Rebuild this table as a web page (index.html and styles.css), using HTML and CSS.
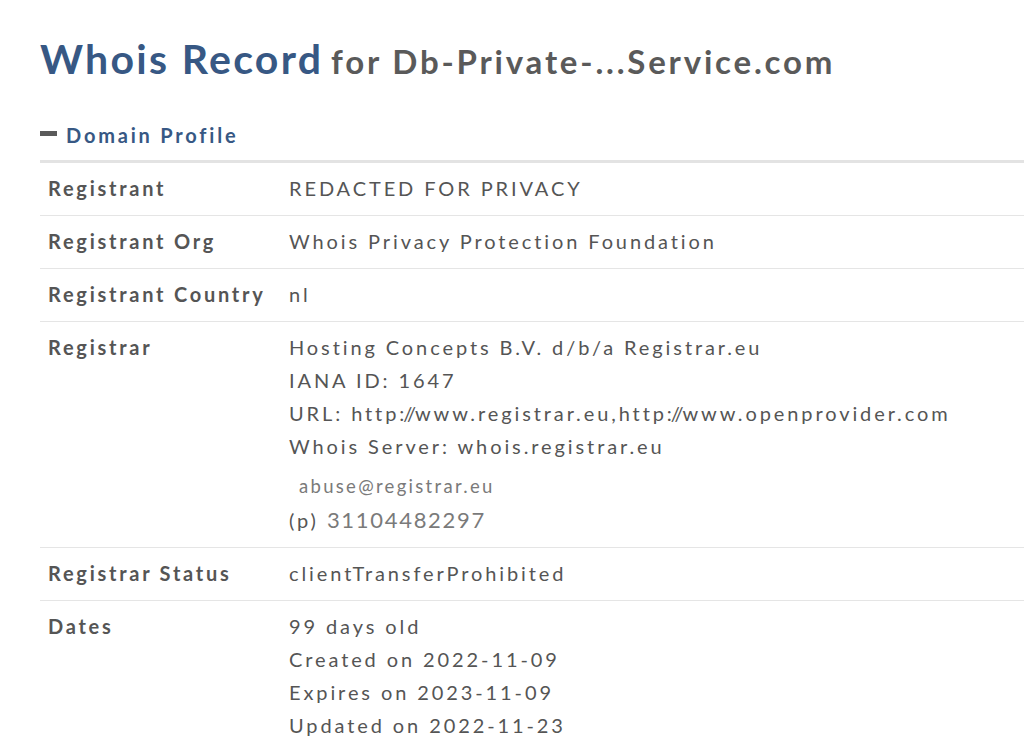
FILE: index.html
```html
<!DOCTYPE html>
<html>
<head>
<meta charset="utf-8">
<link rel="stylesheet" href="styles.css">
</head>
<body>
<div class="page">
  <h1 class="title"><span class="title-main">Whois Record</span> <span class="title-sub">for Db-Private-...Service.com</span></h1>
  <div class="section-head">
    <span class="minus"></span>
    <span class="section-title">Domain Profile</span>
  </div>
  <div class="table">
    <div class="row">
      <div class="label">Registrant</div>
      <div class="value">REDACTED FOR PRIVACY</div>
    </div>
    <div class="row">
      <div class="label">Registrant Org</div>
      <div class="value">Whois Privacy Protection Foundation</div>
    </div>
    <div class="row">
      <div class="label">Registrant Country</div>
      <div class="value">nl</div>
    </div>
    <div class="row">
      <div class="label">Registrar</div>
      <div class="value">
        <div>Hosting Concepts B.V. d/b/a Registrar.eu</div>
        <div>IANA ID: 1647</div>
        <div>URL: http<span class="sl">://</span>www.registrar.eu,http<span class="sl">://</span>www.openprovider.com</div>
        <div>Whois Server: whois.registrar.eu</div>
        <div class="contact">
          <div class="email">abuse@registrar.eu</div>
          <div class="phone"><span class="p">(p)</span> <span class="num">31104482297</span></div>
        </div>
      </div>
    </div>
    <div class="row">
      <div class="label">Registrar Status</div>
      <div class="value">clientTransferProhibited</div>
    </div>
    <div class="row last">
      <div class="label">Dates</div>
      <div class="value">
        <div>99 days old</div>
        <div>Created on 2022-11-09</div>
        <div>Expires on 2023-11-09</div>
        <div>Updated on 2022-11-23</div>
      </div>
    </div>
  </div>
</div>
</body>
</html>
```
FILE: styles.css
```css
html, body {
  margin: 0;
  padding: 0;
  background: #fff;
  overflow: hidden;
}
body {
  font-family: Lato, "Open Sans", sans-serif;
  color: #555;
}
.page {
  padding: 31px 0 0 40px;
}
.title {
  margin: 0;
  font-weight: 700;
  line-height: 56px;
  white-space: nowrap;
}
.title-main {
  font-size: 41px;
  letter-spacing: 2.3px;
  color: #375884;
}
.title-sub {
  font-size: 33px;
  letter-spacing: 2.8px;
  color: #5a5a5a;
}
.section-head {
  display: flex;
  align-items: center;
  margin-top: 30px;
  height: 30px;
  padding-bottom: 10px;
  border-bottom: 3px solid #e3e3e3;
}
.minus {
  width: 17px;
  height: 5px;
  background: #5a5a5a;
  margin-right: 9px;
  margin-top: -4px;
}
.section-title {
  font-size: 20px;
  font-weight: 700;
  color: #375884;
  letter-spacing: 2.8px;
}
.row {
  display: flex;
  border-bottom: 1px solid #e5e5e5;
  padding: 9px 0 10px;
  font-size: 20px;
  line-height: 33px;
  letter-spacing: 2.9px;
}
.row.last {
  border-bottom: none;
}
.label {
  width: 249px;
  flex: none;
  box-sizing: border-box;
  padding-left: 8px;
  font-weight: 700;
  letter-spacing: 2.75px;
}
.value {
  flex: 1;
  white-space: nowrap;
}
.sl {
  letter-spacing: -1px;
}
.contact {
  padding-top: 6px;
}
.email {
  padding-left: 10px;
  font-size: 18.5px;
  color: #7a7a7a;
  letter-spacing: 2.3px;
  line-height: 34px;
}
.phone {
  line-height: 34px;
}
.num {
  font-size: 22px;
  color: #7a7a7a;
  letter-spacing: 1.7px;
}
```
